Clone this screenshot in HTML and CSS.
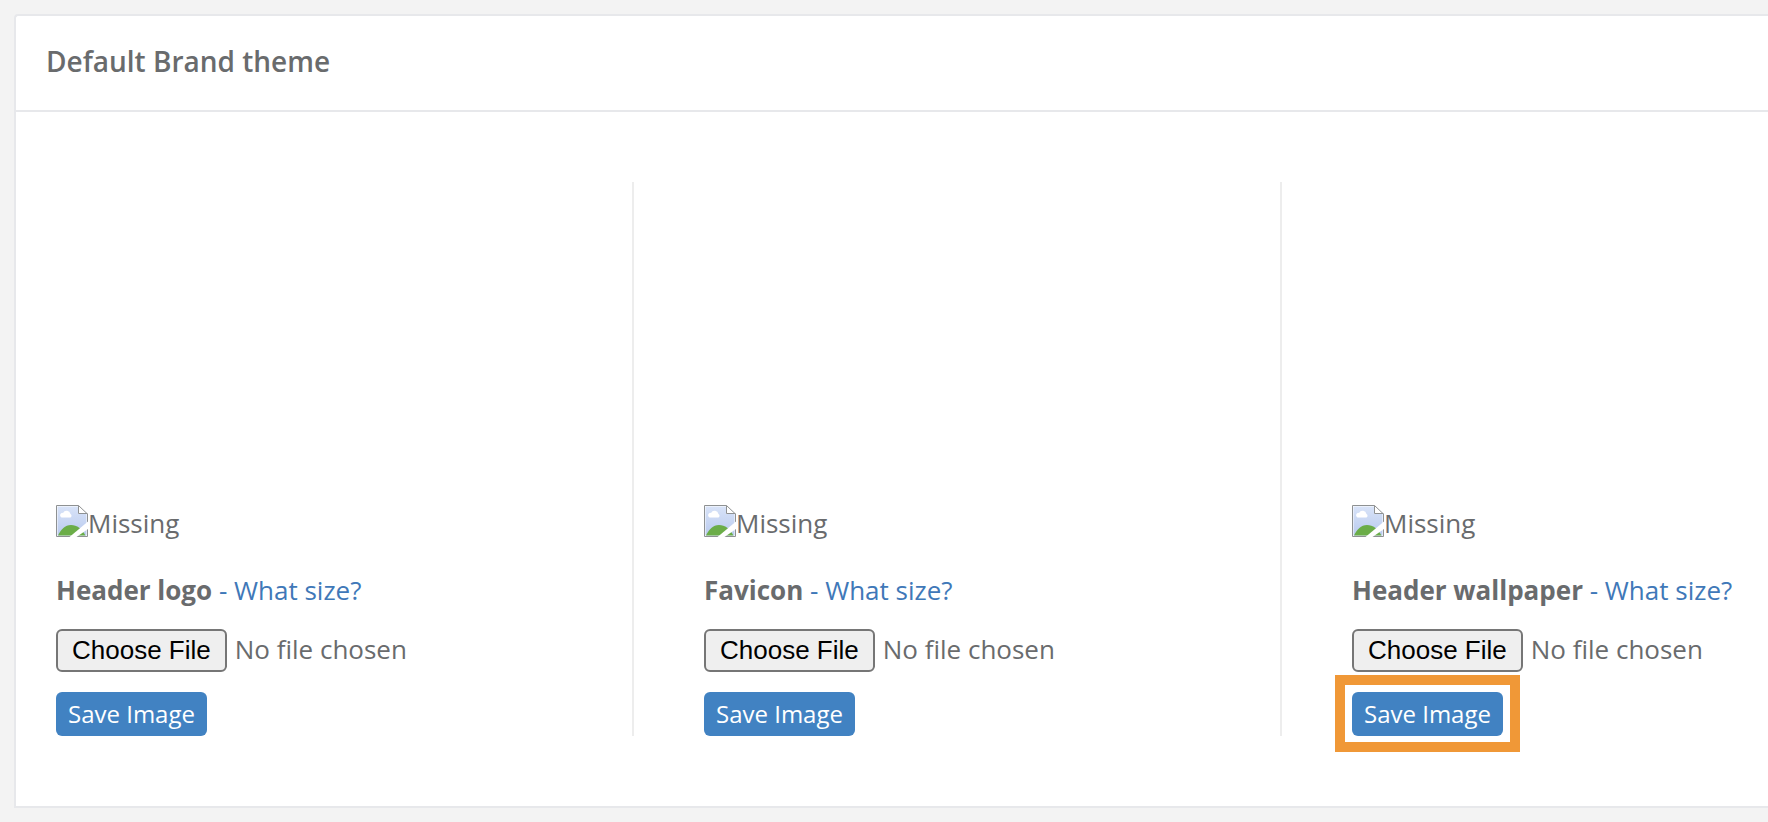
FILE: index.html
```html
<!DOCTYPE html>
<html lang="en">
<head>
    <meta charset="UTF-8">
    <meta name="viewport" content="width=device-width, initial-scale=1.0">
    <title>Default Brand theme</title>
    <link rel="stylesheet" href="styles.css">
</head>
<body>
    <svg class="sprite" aria-hidden="true">
        <defs>
            <linearGradient id="sky" x1="0" y1="0" x2="0" y2="1">
                <stop offset="0" stop-color="#d8e3f8"/>
                <stop offset="1" stop-color="#b9caee"/>
            </linearGradient>
        </defs>
        <symbol id="missing-icon" viewBox="0 0 32 32">
            <path fill="#fff" d="M0 0h23l9 9v23H0z"/>
            <path fill="url(#sky)" d="M1.500 1.500H22V9h8.500v21.500h-29z"/>
            <path fill="#fff" d="M5.500 12.500a2.500 2.500 0 0 1 0-4.500 2 2 0 0 1 1.500 0 4 4 0 0 1 7.500 1 2 2 0 0 1 0 3.500z"/>
            <path fill="#6bad48" d="M2 30.500c3-6 7-10.500 13-10.500s11 4 14.500 10.500z"/>
            <path fill="none" stroke="#8e9192" d="M.5 31.500V.5h22l9 8.500v22.500zM22.500.5V8.500h9"/>
            <path fill="#fff" d="M13.500 32 32 16.500V24L20.500 32z"/>
        </symbol>
    </svg>

    <section class="ibox">
        <header class="ibox-title">
            <h1>Default Brand theme</h1>
        </header>
        <div class="ibox-content">
            <form class="brand-image">
                <div class="preview"><svg class="missing"><use href="#missing-icon"/></svg>Missing</div>
                <p><label for="header-logo">Header logo</label> <a href="#">- What size?</a></p>
                <input type="file" id="header-logo" accept="image/*">
                <button type="button" class="btn">Save Image</button>
            </form>
            <form class="brand-image">
                <div class="preview"><svg class="missing"><use href="#missing-icon"/></svg>Missing</div>
                <p><label for="favicon">Favicon</label> <a href="#">- What size?</a></p>
                <input type="file" id="favicon" accept="image/*">
                <button type="button" class="btn">Save Image</button>
            </form>
            <form class="brand-image">
                <div class="preview"><svg class="missing"><use href="#missing-icon"/></svg>Missing</div>
                <p><label for="header-wallpaper">Header wallpaper</label> <a href="#">- What size?</a></p>
                <input type="file" id="header-wallpaper" accept="image/*">
                <button type="button" class="btn highlight">Save Image</button>
            </form>
        </div>
    </section>
</body>
</html>
```
FILE: styles.css
```css
* {
    box-sizing: border-box;
}

body {
    margin: 0;
    padding: 14px 0 14px 14px;
    background-color: #f3f3f3;
    color: #696b6d;
    font-family: "Open Sans", sans-serif;
    font-size: 26px;
    line-height: 36px;
}

.sprite {
    position: absolute;
    width: 0;
    height: 0;
}

.ibox {
    background-color: #fff;
    border: 2px solid #e7e8eb;
    border-right: 0;
    border-radius: 4px 0 0 0;
}

.ibox-title {
    padding: 27px 30px 31px;
    border-bottom: 2px solid #e7e8eb;
}

h1 {
    margin: 0;
    font-size: 28px;
    font-weight: 600;
    line-height: 36px;
}

.ibox-content {
    display: grid;
    grid-template-columns: minmax(0, 618fr) minmax(0, 648fr) minmax(0, 486fr);
    padding: 70px 0;
}

.brand-image {
    display: flex;
    flex-direction: column;
    align-items: flex-start;
    padding-left: 70px;
    border-right: 2px solid #ededed;
}

.brand-image:first-child {
    padding-left: 40px;
}

.brand-image:last-child {
    border-right: 0;
}

.preview {
    display: flex;
    align-items: flex-end;
    height: 359px;
}

.missing {
    width: 32px;
    height: 32px;
    margin-bottom: 4px;
}

p {
    margin: 31px 0 21px;
    white-space: nowrap;
}

label {
    font-weight: 700;
}

a {
    color: #4078b8;
    text-decoration: none;
}

input[type="file"] {
    max-width: 100%;
    height: 43px;
    margin-bottom: 20px;
    color: inherit;
    font: inherit;
    line-height: 36px;
}

input[type="file"]::file-selector-button {
    height: 43px;
    margin: 0 8px 0 0;
    padding: 0 14px;
    border: 2px solid #767676;
    border-radius: 6px;
    background-color: #efefef;
    color: #000;
    font-family: "Liberation Sans", Arial, sans-serif;
    font-size: 26px;
}

.btn {
    position: relative;
    height: 44px;
    padding: 0 12px 2px;
    border: 0;
    border-radius: 6px;
    background-color: #4182c2;
    color: #fff;
    font-family: inherit;
    font-size: 24px;
    cursor: pointer;
}

/* square frame around the button */
.highlight::after {
    content: "";
    position: absolute;
    inset: -17px -17px -16px;
    border: 10px solid #f09837;
    pointer-events: none;
}
```
